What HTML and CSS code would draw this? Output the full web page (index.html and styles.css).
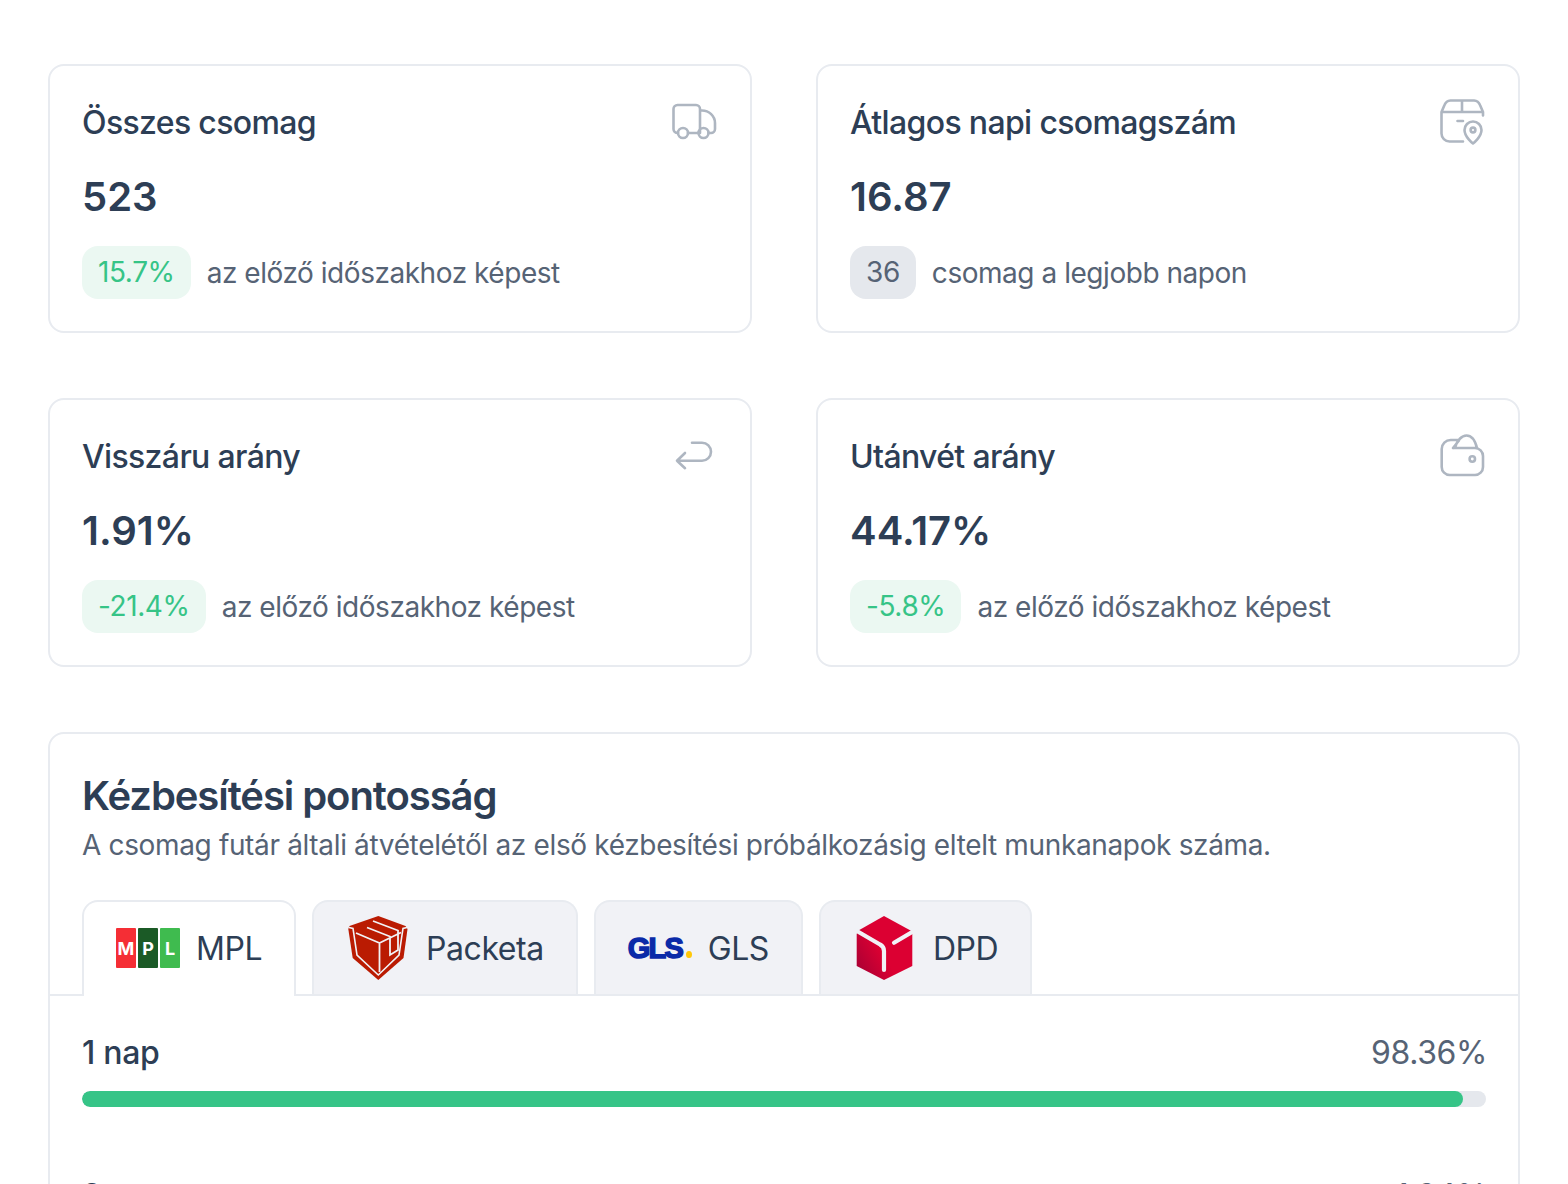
FILE: index.html
```html
<!DOCTYPE html>
<html lang="hu">
<head>
<meta charset="utf-8">
<title>Statisztika</title>
<link rel="stylesheet" href="styles.css">
</head>
<body>
<main class="page">
  <section class="stats">
    <article class="card">
      <div class="card-head"><h3 class="card-title">Összes csomag</h3>
        <svg class="icon" viewBox="0 0 48 48" fill="none"><path d="M8 35C5 35 3.500 33 3.500 31V11a4 4 0 0 1 4-4H26a4 4 0 0 1 4 4V35M18 35H28.500M30 12.500H32C39 12.500 45 18 45 25V31a4 4 0 0 1-4 4H38.500"/><circle cx="13" cy="35" r="5"/><circle cx="33.500" cy="35" r="5"/></svg>
      </div>
      <div class="value">523</div>
      <div class="meta"><span class="pill pill-green">15.7%</span><span class="meta-text">az előző időszakhoz képest</span></div>
    </article>
    <article class="card">
      <div class="card-head"><h3 class="card-title">Átlagos napi csomagszám</h3>
        <svg class="icon" viewBox="0 0 48 48" fill="none"><path d="M25 43.500H11.500a8 8 0 0 1-8-8V14L6.500 7a7 7 0 0 1 6-4.500H36a7 7 0 0 1 6 4.500L45 14V17.500M3.500 14H45M24 2.500V14M19.500 23H25"/><path d="M35 45.500s-8.500-6.500-8.500-13.500a8.500 8.500 0 0 1 17 0c0 7-8.500 13.500-8.500 13.500z"/><circle cx="35" cy="32" r="2.400"/></svg>
      </div>
      <div class="value">16.87</div>
      <div class="meta"><span class="pill pill-gray">36</span><span class="meta-text">csomag a legjobb napon</span></div>
    </article>
    <article class="card">
      <div class="card-head"><h3 class="card-title">Visszáru arány</h3>
        <svg class="icon" viewBox="0 0 48 48" fill="none"><path d="M22 10.700H32a9 9 0 0 1 0 18H7M15 21 7 28.700l8 7.500"/></svg>
      </div>
      <div class="value">1.91%</div>
      <div class="meta"><span class="pill pill-green">-21.4%</span><span class="meta-text">az előző időszakhoz képest</span></div>
    </article>
    <article class="card">
      <div class="card-head"><h3 class="card-title">Utánvét arány</h3>
        <svg class="icon" viewBox="0 0 48 48" fill="none"><path d="M15 16H37a8 8 0 0 1 8 8V35a8 8 0 0 1-8 8H11.700a8 8 0 0 1-8-8V17a9 9 0 0 1 9-9H21M21 8.500 15 16M17 16C19 8 24 3.500 28.500 3.500 33 3.500 37 8 39 16"/><circle cx="34.300" cy="27" r="2.700"/></svg>
      </div>
      <div class="value">44.17%</div>
      <div class="meta"><span class="pill pill-green">-5.8%</span><span class="meta-text">az előző időszakhoz képest</span></div>
    </article>
  </section>

  <section class="panel">
    <header class="panel-head">
      <h2 class="panel-title">Kézbesítési pontosság</h2>
      <p class="panel-sub">A csomag futár általi átvételétől az első kézbesítési próbálkozásig eltelt munkanapok száma.</p>
    </header>
    <nav class="tabs">
      <div class="tab tab-active">
        <span class="mpl"><b class="mpl-m">M</b><b class="mpl-p">P</b><b class="mpl-l">L</b></span>
        <span>MPL</span>
      </div>
      <div class="tab">
        <svg class="logo" viewBox="0 0 64 64">
          <path fill="#ba1b02" d="M32.300 0 59.500 10 61.500 13 57.500 42 32.300 64 6.700 42 2.300 13 3.500 10z"/>
          <path fill="none" stroke="#f1f2f6" stroke-width="1.600" d="M3 11.500 7 12.500 11 39 32.300 59 53 39 57 12.500 61 11.500"/>
          <path fill="none" stroke="#f1f2f6" stroke-width="1.800" d="M10 17 33.500 27V56M33.500 27 55 16.500M21 11.500 44 20.500V39L52 34V14.500L27 5"/>
        </svg>
        <span>Packeta</span>
      </div>
      <div class="tab">
        <span class="gls">GLS<i class="gls-dot"></i></span>
        <span>GLS</span>
      </div>
      <div class="tab">
        <svg class="logo" viewBox="0 0 64 64">
          <defs><linearGradient id="dpdg" x1="0" y1="0.850" x2="0.450" y2="0.550"><stop offset="0" stop-color="#a90034"/><stop offset="1" stop-color="#dc0032"/></linearGradient></defs>
          <path fill="url(#dpdg)" d="M31 0 58 14.700 59.300 18V50L31 64 3.700 50V18L5 14.700z"/>
          <path fill="none" stroke="#f1f2f6" stroke-width="4.200" stroke-linecap="round" d="M3 14.500 27 28.500Q31 30.500 31 35V54M41 26.800 60 15.500"/>
        </svg>
        <span>DPD</span>
      </div>
    </nav>
    <div class="rows">
      <div class="row">
        <div class="row-head"><span class="row-label">1 nap</span><span class="row-value">98.36%</span></div>
        <div class="track"><div class="fill" style="width:98.36%"></div></div>
      </div>
      <div class="row">
        <div class="row-head"><span class="row-label">2 nap</span><span class="row-value">1.64%</span></div>
        <div class="track"><div class="fill" style="width:1.64%"></div></div>
      </div>
    </div>
  </section>
</main>
</body>
</html>
```
FILE: styles.css
```css
* { box-sizing: border-box; }
html, body { margin: 0; height: 100%; overflow: hidden; }
body { background: #fff; color: #2d3e55; font-family: Inter, "Liberation Sans", sans-serif; }
.page { padding: 64px 48px 0; }
.stats { display: grid; grid-template-columns: 704px 704px; column-gap: 64px; row-gap: 65px; }
.card { border: 2px solid #e8ebf0; border-radius: 16px; padding: 32px; }
.card-head { display: flex; justify-content: space-between; align-items: flex-start; height: 52px; }
.card-title { margin: 0; font-size: 32px; line-height: 50px; font-weight: 500; letter-spacing: -0.65px; color: #2d3e55; }
.icon { width: 48px; height: 48px; stroke: #aeb6c1; stroke-width: 2.600; stroke-linecap: round; stroke-linejoin: round; flex: none; }
.value { margin-top: 23px; font-size: 40px; line-height: 48px; font-weight: 600; color: #2d3e55; }
.meta { margin-top: 25px; display: flex; align-items: center; gap: 16px; }
.pill { height: 53px; padding: 0 16px; border-radius: 16px; font-size: 28px; line-height: 53px; letter-spacing: -0.4px; }
.pill-green { background: #ebf8f2; color: #36c487; }
.pill-gray { background: #e5e8ed; color: #566375; }
.meta-text { font-size: 28px; letter-spacing: -0.46px; color: #566375; }
.panel { margin-top: 65px; border: 2px solid #e8ebf0; border-radius: 16px; }
.panel-head { padding: 32px 32px 0; }
.panel-title { margin: 0; font-size: 40px; line-height: 60px; font-weight: 600; color: #2d3e55; letter-spacing: -1.07px; }
.panel-sub { margin: 0; font-size: 28px; line-height: 38px; letter-spacing: -0.35px; color: #566375; }
.tabs { display: flex; align-items: flex-start; gap: 16px; margin-top: 36px; padding: 0 32px; height: 96px; border-bottom: 2px solid #e8ebf0; }
.tab { height: 94px; display: flex; align-items: center; gap: 16px; padding: 0 32px; background: #f1f2f6; border: 2px solid #e8ebf0; border-bottom: 0; border-radius: 16px 16px 0 0; font-size: 32px; letter-spacing: -0.45px; color: #2d3e55; }
.tab-active { background: #fff; height: 96px; padding-bottom: 2px; }
.mpl { display: flex; gap: 2px; width: 64px; height: 40px; }
.mpl b { flex: 1; display: flex; align-items: center; justify-content: center; color: #fff; font-size: 18px; font-weight: 700; letter-spacing: 0; border-radius: 1px; }
.mpl-m { background: #f52e35; }
.mpl-p { background: #1b5a26; }
.mpl-l { background: #3fbb4f; }
.logo { width: 64px; height: 64px; flex: none; }
.gls { width: 64px; font-family: "Liberation Sans", sans-serif; font-weight: 700; font-size: 29px; color: #0a2aa8; letter-spacing: -1.800px; -webkit-text-stroke: 1.500px #0a2aa8; display: flex; align-items: baseline; gap: 4px; }
.gls-dot { width: 7px; height: 7px; border-radius: 50%; background: #ffc80a; }
.rows { padding: 33px 32px 32px; display: flex; flex-direction: column; gap: 65px; }
.row-head { display: flex; justify-content: space-between; font-size: 32px; line-height: 48px; }
.row-label { font-weight: 500; letter-spacing: -0.3px; color: #2d3e55; }
.row-value { color: #566375; letter-spacing: -0.4px; margin-right: -1px; }
.track { margin-top: 14px; height: 16px; border-radius: 8px; background: #e5e8ed; overflow: hidden; }
.fill { height: 100%; background: #36c487; border-radius: 8px; }
```
